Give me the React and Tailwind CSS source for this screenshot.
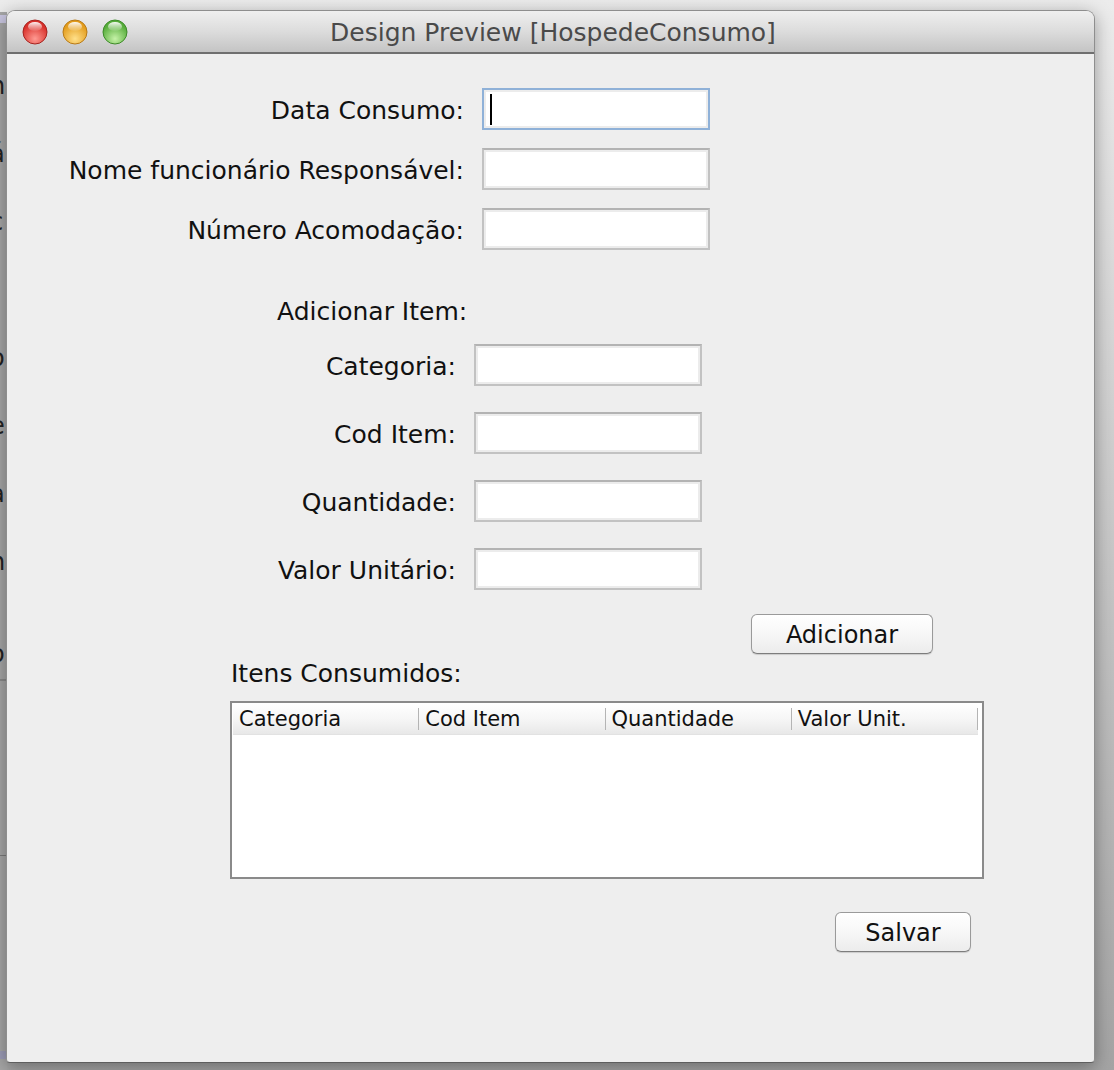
import React from "react";

const font = { fontFamily: '"DejaVu Sans", "Liberation Sans", sans-serif' };

function Light({ id, c1, c2, c3 }) {
  return (
    <svg width="26" height="26" viewBox="0 0 26 26">
      <defs>
        <radialGradient id={"g" + id} cx="50%" cy="78%" r="62%">
          <stop offset="0%" stopColor={c3} />
          <stop offset="100%" stopColor={c1} />
        </radialGradient>
        <linearGradient id={"h" + id} x1="0" y1="0" x2="0" y2="1">
          <stop offset="0%" stopColor="#ffffff" stopOpacity="0.95" />
          <stop offset="100%" stopColor="#ffffff" stopOpacity="0.05" />
        </linearGradient>
      </defs>
      <circle cx="13" cy="13" r="12" fill={`url(#g${id})`} stroke={c2} strokeWidth="1" />
      <ellipse cx="13" cy="7.5" rx="7" ry="4.5" fill={`url(#h${id})`} />
    </svg>
  );
}

function Field({ focused }) {
  return (
    <div
      className={
        "relative w-[228px] h-[42px] bg-white border-2 " +
        (focused ? "border-[#8fb1d8]" : "border-[#c2c2c2] border-t-[#b3b3b3]")
      }
    >
      <div className="absolute inset-0 border-2 border-[#ececec]" />
      {focused && <div className="absolute left-[6px] top-[4px] w-[2px] h-[31px] bg-black" />}
    </div>
  );
}

function Row({ label, labelW, focused }) {
  return (
    <div className="flex items-center h-[42px]">
      <div className="text-right text-[25px] text-[#111] leading-none pt-[3px]" style={{ width: labelW }}>
        {label}
      </div>
      <div className="ml-[18px]">
        <Field focused={focused} />
      </div>
    </div>
  );
}

function Button({ children, w }) {
  return (
    <div
      className="h-[40px] rounded-[6px] border border-[#9a9a9a] border-b-[#7d7d7d] bg-gradient-to-b from-white via-[#f7f7f7] to-[#ececec] flex items-center justify-center text-[24px] text-[#111] pt-[2px] shadow-[0_1px_1px_rgba(0,0,0,0.15)]"
      style={{ width: w }}
    >
      {children}
    </div>
  );
}

export default function App() {
  const cols = ["Categoria", "Cod Item", "Quantidade", "Valor Unit."];
  const strip = ["n", "á", "c", "t", "o", "e", "a", "n"];
  return (
    <div
      className="relative w-[1114px] h-[1070px] overflow-hidden bg-gradient-to-b from-[#ececec] via-[#c8c8c8] to-[#a4a4a4]"
      style={font}
    >
      {/* background window strip at left */}
      <div className="absolute left-0 top-[12px] w-[7px] h-[1058px] bg-[#a6a6a6] overflow-hidden flex flex-col">
        <div className="mt-[3px] w-[7px] h-[8px] bg-[#c9c6e0] shrink-0" />
        <div className="mt-[48px] flex flex-col gap-[38px] ml-[-10px] text-[24px] leading-[30px] text-[#222]">
          {strip.map((s, i) => (
            <div key={i}>{s}</div>
          ))}
        </div>
        <div className="mt-[62px] ml-[-10px] text-[24px] leading-[30px] text-[#222]">o</div>
        <div className="mt-[10px] w-[7px] h-[2px] bg-[#8a8a8a] shrink-0" />
        <div className="mt-[174px] w-[7px] h-[1px] bg-[#7a7a7a] shrink-0" />
        <div className="mt-[195px] w-[7px] h-[8px] bg-[#9c9cb6] shrink-0" />
      </div>

      {/* window */}
      <div className="absolute left-[6px] top-[10px] w-[1089px] h-[1053px] rounded-t-[9px] rounded-b-[4px] border border-[#8e8e8e] border-b-[#5e5e5e] bg-[#eeeeee] overflow-hidden shadow-[0_4px_18px_rgba(0,0,0,0.35)]">
        {/* title bar */}
        <div className="relative h-[43px] bg-gradient-to-b from-[#efefef] via-[#dcdcdc] to-[#c4c4c4] border-b-2 border-[#6f6f6f] flex items-center">
          <div className="flex items-center gap-[14px] pl-[15px] pt-[1px]">
            <Light id="r" c1="#d8302a" c2="#a52420" c3="#ff9a92" />
            <Light id="y" c1="#e39c1c" c2="#b77a18" c3="#ffe08a" />
            <Light id="gr" c1="#56ac3a" c2="#3e8a2a" c3="#c6f2a8" />
          </div>
          <div className="absolute inset-0 flex items-center justify-center text-[25px] text-[#4a4a4a] pt-[2px] pl-[5px]">
            Design Preview [HospedeConsumo]
          </div>
        </div>

        {/* content */}
        <div className="pt-[34px]">
          <div className="flex flex-col gap-[18px]">
            <Row label="Data Consumo:" labelW={457} focused />
            <Row label="Nome funcionário Responsável:" labelW={457} />
            <Row label="Número Acomodação:" labelW={457} />
          </div>

          <div className="mt-[39px] h-[42px] flex items-center pl-[270px] pt-[3px] text-[25px] text-[#111]">
            Adicionar Item:
          </div>

          <div className="mt-[13px] flex flex-col gap-[26px]">
            <Row label="Categoria:" labelW={449} />
            <Row label="Cod Item:" labelW={449} />
            <Row label="Quantidade:" labelW={449} />
            <Row label="Valor Unitário:" labelW={449} />
          </div>

          <div className="mt-[24px] pl-[744px]">
            <Button w={182}>Adicionar</Button>
          </div>

          <div className="mt-[3px] h-[30px] flex items-center pl-[224px] pt-[4px] text-[25px] text-[#111]">
            Itens Consumidos:
          </div>

          <div className="mt-[14px] ml-[223px] w-[754px] h-[178px] border-2 border-[#8a8a8a] bg-white p-[1px]">
            <div className="flex h-[31px] mr-[3px] bg-gradient-to-b from-white via-[#f6f6f6] to-[#e8e8e8] border-b border-[#e2e2e2]">
              {cols.map((c) => (
                <div key={c} className="flex-1 flex items-center pl-[6px] pt-[2px] text-[21px] text-[#111] relative">
                  {c}
                  <div className="absolute right-0 top-[4px] w-[1px] h-[22px] bg-[#b4b4b4]" />
                </div>
              ))}
            </div>
          </div>

          <div className="mt-[33px] pl-[828px]">
            <Button w={136}>Salvar</Button>
          </div>
        </div>
      </div>
    </div>
  );
}
